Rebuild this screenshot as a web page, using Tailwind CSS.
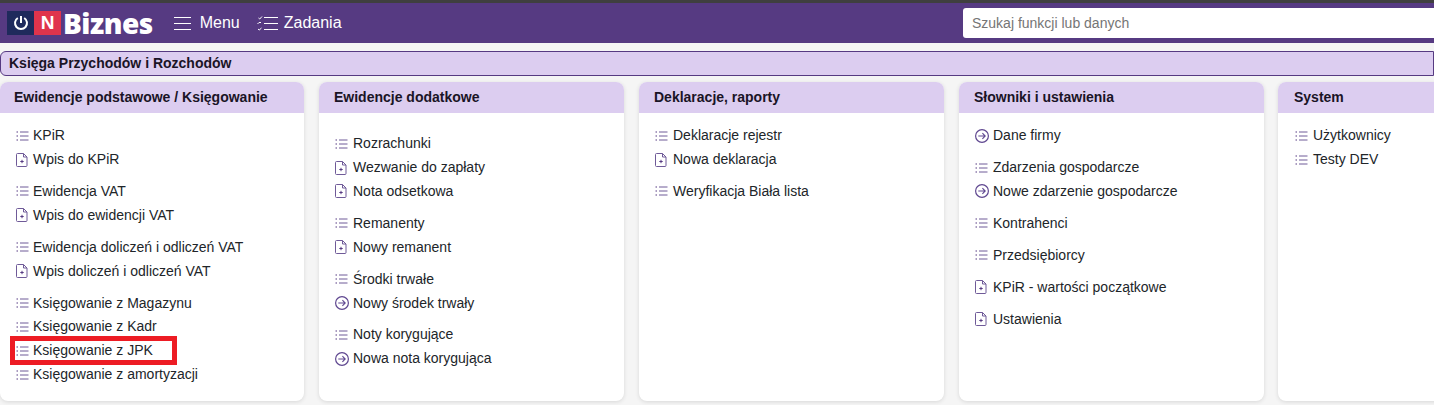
<!DOCTYPE html>
<html lang="pl">

<head>
    <meta charset="UTF-8" />
    <meta name="viewport" content="width=device-width, initial-scale=1.0" />
    <title>Księga Przychodów i Rozchodów</title>
    <script src="https://cdn.jsdelivr.net/npm/@tailwindcss/browser@4"></script>
</head>

<body class="bg-[#f5f5f5] h-[405px] overflow-hidden font-['Liberation_Sans',Arial,sans-serif] text-[14px] text-[#212529]">
    <svg class="hidden">
        <symbol id="i-list" viewBox="0 0 14 12">
            <path d="M4 2h8.500M4 6h8.500M4 10h8.500" fill="none" stroke="#6f5a98" stroke-width="1" />
            <path d="M.5 1.500h1.500v1H.5zM.5 5.500h1.500v1H.5zM.5 9.500h1.500v1H.5z" fill="#563a82" />
        </symbol>
        <symbol id="i-file" viewBox="0 0 12 14">
            <path d="M1.500 .5h6l3.500 3.500v8.500a1 1 0 0 1-1 1h-8.500a1 1 0 0 1-1-1v-11a1 1 0 0 1 1-1zM7.500 .5v3.500h3.500" fill="none" stroke="#6f5a98" stroke-width="1" />
            <path d="M6 6.800v3.400M4.300 8.500h3.400" fill="none" stroke="#563a82" stroke-width="1" />
        </symbol>
        <symbol id="i-go" viewBox="0 0 14 14">
            <circle cx="7" cy="7" r="6.400" fill="none" stroke="#5f4790" stroke-width="1.200" />
            <path d="M3.300 7h6.900M7.400 4.200l2.800 2.800l-2.800 2.800" fill="none" stroke="#5f4790" stroke-width="1.100" />
        </symbol>
    </svg>

    <div class="h-[3px] bg-[#3f3f3f]"></div>

    <!-- top bar -->
    <header class="h-[40px] bg-[#563a82] flex items-center pl-[7px] text-white">
        <div class="flex items-center h-[24px]">
            <div class="w-[27px] h-[24px] bg-[#1f2a5c] flex items-center justify-center">
                <svg class="w-[16px] h-[16px]" viewBox="0 0 16 16">
                    <path d="M4.800 3a6 6 0 1 0 6.400 0" fill="none" stroke="#fff" stroke-width="2" />
                    <path d="M8 1v7" fill="none" stroke="#fff" stroke-width="2" />
                </svg>
            </div>
            <div class="w-[27px] h-[24px] bg-[#e0344c] flex items-center justify-center font-bold text-[19px]">N</div>
            <div class="ml-[2px] font-extrabold text-[28px] leading-[24px] font-['Open_Sans',sans-serif] tracking-[-0.5px]">Biznes</div>
        </div>
        <div class="ml-[21px] flex items-center gap-[9px] text-[16px]">
            <svg class="w-[17px] h-[15px]" viewBox="0 0 17 15">
                <path d="M0 1.500h17M0 7.500h17M0 13.500h17" fill="none" stroke="#fff" stroke-width="1" />
            </svg>
            Menu
        </div>
        <div class="ml-[17px] flex items-center gap-[6px] text-[16px]">
            <svg class="w-[21px] h-[15px]" viewBox="0 0 21 15">
                <path d="M7 1.500h14M7 7.500h14M7 13.500h14" fill="none" stroke="#fff" stroke-width="1" />
                <path d="M1.500 2l1.200 1l2.300-2.500M.5 8l1.500-1.500h2M1 13l1.200 1l2.300-2" fill="none" stroke="#fff" stroke-width="1" />
            </svg>
            Zadania
        </div>
        <input type="text" placeholder="Szukaj funkcji lub danych"
            class="ml-auto w-[471px] h-[30px] bg-white rounded-l-[3px] pl-[9px] text-[14px] placeholder:text-[#757575] outline-none" />
    </header>

    <!-- title -->
    <div class="mt-[8px] h-[25px] bg-[#dccdf0] border border-[#563a82] rounded-l-[6px] pl-[8px] flex items-center font-bold text-[14px] text-[#1a1426]">
        Księga Przychodów i Rozchodów
    </div>

    <!-- cards -->
    <main class="pt-[6px] pb-[4px] flex gap-[15px] w-[1434px] overflow-hidden">
        <section class="w-[304px] h-[319px] shrink-0 bg-white rounded-[8px] shadow-[0_1px_4px_rgba(0,0,0,0.12)] overflow-hidden">
            <h2 class="h-[31px] bg-[#dccdf0] pl-[14px] flex items-center font-bold text-[#1a1426]">Ewidencje podstawowe / Księgowanie</h2>
            <div class="pt-[10.750px] pl-[16px] flex flex-col gap-[8px]">
                <ul>
                    <li class="h-[23.900px] flex items-center gap-[3px]"><svg class="w-[14px] h-[12px]"><use href="#i-list" /></svg>KPiR</li>
                    <li class="h-[23.900px] flex items-center gap-[3px]"><svg class="w-[14px] h-[14px] pr-[2px]"><use href="#i-file" /></svg>Wpis do KPiR</li>
                </ul>
                <ul>
                    <li class="h-[23.900px] flex items-center gap-[3px]"><svg class="w-[14px] h-[12px]"><use href="#i-list" /></svg>Ewidencja VAT</li>
                    <li class="h-[23.900px] flex items-center gap-[3px]"><svg class="w-[14px] h-[14px] pr-[2px]"><use href="#i-file" /></svg>Wpis do ewidencji VAT</li>
                </ul>
                <ul>
                    <li class="h-[23.900px] flex items-center gap-[3px]"><svg class="w-[14px] h-[12px]"><use href="#i-list" /></svg>Ewidencja doliczeń i odliczeń VAT</li>
                    <li class="h-[23.900px] flex items-center gap-[3px]"><svg class="w-[14px] h-[14px] pr-[2px]"><use href="#i-file" /></svg>Wpis doliczeń i odliczeń VAT</li>
                </ul>
                <ul>
                    <li class="h-[23.900px] flex items-center gap-[3px]"><svg class="w-[14px] h-[12px]"><use href="#i-list" /></svg>Księgowanie z Magazynu</li>
                    <li class="h-[23.900px] flex items-center gap-[3px]"><svg class="w-[14px] h-[12px]"><use href="#i-list" /></svg>Księgowanie z Kadr</li>
                    <li class="relative h-[23.900px] flex items-center gap-[3px]"><svg class="w-[14px] h-[12px]"><use href="#i-list" /></svg>Księgowanie z JPK
                        <div class="absolute left-[-6px] top-[-3px] w-[167px] h-[29px] border-[5px] border-[#ed1c24]"></div>
                    </li>
                    <li class="h-[23.900px] flex items-center gap-[3px]"><svg class="w-[14px] h-[12px]"><use href="#i-list" /></svg>Księgowanie z amortyzacji</li>
                </ul>
            </div>
        </section>

        <section class="w-[305px] h-[319px] shrink-0 bg-white rounded-[8px] shadow-[0_1px_4px_rgba(0,0,0,0.12)] overflow-hidden">
            <h2 class="h-[31px] bg-[#dccdf0] pl-[15px] flex items-center font-bold text-[#1a1426]">Ewidencje dodatkowe</h2>
            <div class="pt-[18.750px] pl-[16px] flex flex-col gap-[8px]">
                <ul>
                    <li class="h-[23.900px] flex items-center gap-[4px]"><svg class="w-[14px] h-[12px]"><use href="#i-list" /></svg>Rozrachunki</li>
                    <li class="h-[23.900px] flex items-center gap-[4px]"><svg class="w-[14px] h-[14px] pr-[2px]"><use href="#i-file" /></svg>Wezwanie do zapłaty</li>
                    <li class="h-[23.900px] flex items-center gap-[4px]"><svg class="w-[14px] h-[14px] pr-[2px]"><use href="#i-file" /></svg>Nota odsetkowa</li>
                </ul>
                <ul>
                    <li class="h-[23.900px] flex items-center gap-[4px]"><svg class="w-[14px] h-[12px]"><use href="#i-list" /></svg>Remanenty</li>
                    <li class="h-[23.900px] flex items-center gap-[4px]"><svg class="w-[14px] h-[14px] pr-[2px]"><use href="#i-file" /></svg>Nowy remanent</li>
                </ul>
                <ul>
                    <li class="h-[23.900px] flex items-center gap-[4px]"><svg class="w-[14px] h-[12px]"><use href="#i-list" /></svg>Środki trwałe</li>
                    <li class="h-[23.900px] flex items-center gap-[4px]"><svg class="w-[14px] h-[14px]"><use href="#i-go" /></svg>Nowy środek trwały</li>
                </ul>
                <ul>
                    <li class="h-[23.900px] flex items-center gap-[4px]"><svg class="w-[14px] h-[12px]"><use href="#i-list" /></svg>Noty korygujące</li>
                    <li class="h-[23.900px] flex items-center gap-[4px]"><svg class="w-[14px] h-[14px]"><use href="#i-go" /></svg>Nowa nota korygująca</li>
                </ul>
            </div>
        </section>

        <section class="w-[305px] h-[319px] shrink-0 bg-white rounded-[8px] shadow-[0_1px_4px_rgba(0,0,0,0.12)] overflow-hidden">
            <h2 class="h-[31px] bg-[#dccdf0] pl-[15px] flex items-center font-bold text-[#1a1426]">Deklaracje, raporty</h2>
            <div class="pt-[10.750px] pl-[16px] flex flex-col gap-[8px]">
                <ul>
                    <li class="h-[23.900px] flex items-center gap-[4px]"><svg class="w-[14px] h-[12px]"><use href="#i-list" /></svg>Deklaracje rejestr</li>
                    <li class="h-[23.900px] flex items-center gap-[4px]"><svg class="w-[14px] h-[14px] pr-[2px]"><use href="#i-file" /></svg>Nowa deklaracja</li>
                </ul>
                <ul>
                    <li class="h-[23.900px] flex items-center gap-[4px]"><svg class="w-[14px] h-[12px]"><use href="#i-list" /></svg>Weryfikacja Biała lista</li>
                </ul>
            </div>
        </section>

        <section class="w-[305px] h-[319px] shrink-0 bg-white rounded-[8px] shadow-[0_1px_4px_rgba(0,0,0,0.12)] overflow-hidden">
            <h2 class="h-[31px] bg-[#dccdf0] pl-[15px] flex items-center font-bold text-[#1a1426]">Słowniki i ustawienia</h2>
            <div class="pt-[10.750px] pl-[16px] flex flex-col gap-[8px]">
                <ul>
                    <li class="h-[23.900px] flex items-center gap-[4px]"><svg class="w-[14px] h-[14px]"><use href="#i-go" /></svg>Dane firmy</li>
                </ul>
                <ul>
                    <li class="h-[23.900px] flex items-center gap-[4px]"><svg class="w-[14px] h-[12px]"><use href="#i-list" /></svg>Zdarzenia gospodarcze</li>
                    <li class="h-[23.900px] flex items-center gap-[4px]"><svg class="w-[14px] h-[14px]"><use href="#i-go" /></svg>Nowe zdarzenie gospodarcze</li>
                </ul>
                <ul>
                    <li class="h-[23.900px] flex items-center gap-[4px]"><svg class="w-[14px] h-[12px]"><use href="#i-list" /></svg>Kontrahenci</li>
                </ul>
                <ul>
                    <li class="h-[23.900px] flex items-center gap-[4px]"><svg class="w-[14px] h-[12px]"><use href="#i-list" /></svg>Przedsiębiorcy</li>
                </ul>
                <ul>
                    <li class="h-[23.900px] flex items-center gap-[4px]"><svg class="w-[14px] h-[14px] pr-[2px]"><use href="#i-file" /></svg>KPiR - wartości początkowe</li>
                </ul>
                <ul>
                    <li class="h-[23.900px] flex items-center gap-[4px]"><svg class="w-[14px] h-[14px] pr-[2px]"><use href="#i-file" /></svg>Ustawienia</li>
                </ul>
            </div>
        </section>

        <section class="w-[305px] h-[319px] shrink-0 -ml-px bg-white rounded-[8px] shadow-[0_1px_4px_rgba(0,0,0,0.12)] overflow-hidden">
            <h2 class="h-[31px] bg-[#dccdf0] pl-[16px] flex items-center font-bold text-[#1a1426]">System</h2>
            <div class="pt-[10.750px] pl-[17px] flex flex-col gap-[8px]">
                <ul>
                    <li class="h-[23.900px] flex items-center gap-[4px]"><svg class="w-[14px] h-[12px]"><use href="#i-list" /></svg>Użytkownicy</li>
                    <li class="h-[23.900px] flex items-center gap-[4px]"><svg class="w-[14px] h-[12px]"><use href="#i-list" /></svg>Testy DEV</li>
                </ul>
            </div>
        </section>
    </main>
</body>

</html>
